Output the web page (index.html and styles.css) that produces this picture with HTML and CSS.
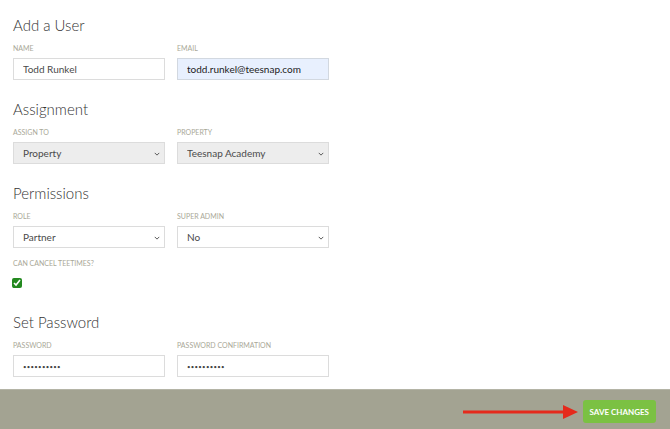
FILE: index.html
```html
<!DOCTYPE html>
<html lang="en">
  <head>
    <meta charset="UTF-8" />
    <meta name="viewport" content="width=device-width, initial-scale=1.0" />
    <title>Add a User</title>
    <link rel="stylesheet" href="styles.css">
  </head>
  <body>
    <div class="page">
      <form class="user-form">
        <!-- User details -->
        <div class="section">
          <h2>Add a User</h2>
          <div class="row">
            <div class="field">
              <label for="name">Name</label>
              <input type="text" id="name" value="Todd Runkel" />
            </div>
            <div class="field">
              <label for="email">Email</label>
              <input type="text" id="email" class="autofill" value="todd.runkel@teesnap.com" />
            </div>
          </div>
        </div>

        <!-- Assignment -->
        <div class="section">
          <h2>Assignment</h2>
          <div class="row">
            <div class="field">
              <label for="assignTo">Assign To</label>
              <div class="select-wrap">
                <select id="assignTo" class="grey">
                  <option>Property</option>
                </select>
                <svg class="chevron" viewBox="0 0 8 5" width="6" height="4"><path d="M1 1l3 3 3-3" fill="none" stroke="#555" stroke-width="1.3"/></svg>
              </div>
            </div>
            <div class="field">
              <label for="property">Property</label>
              <div class="select-wrap">
                <select id="property" class="grey">
                  <option>Teesnap Academy</option>
                </select>
                <svg class="chevron" viewBox="0 0 8 5" width="6" height="4"><path d="M1 1l3 3 3-3" fill="none" stroke="#555" stroke-width="1.3"/></svg>
              </div>
            </div>
          </div>
        </div>

        <!-- Permissions -->
        <div class="section">
          <h2>Permissions</h2>
          <div class="row">
            <div class="field">
              <label for="role">Role</label>
              <div class="select-wrap">
                <select id="role">
                  <option>Partner</option>
                </select>
                <svg class="chevron" viewBox="0 0 8 5" width="6" height="4"><path d="M1 1l3 3 3-3" fill="none" stroke="#555" stroke-width="1.3"/></svg>
              </div>
            </div>
            <div class="field">
              <label for="superAdmin">Super Admin</label>
              <div class="select-wrap">
                <select id="superAdmin">
                  <option>No</option>
                </select>
                <svg class="chevron" viewBox="0 0 8 5" width="6" height="4"><path d="M1 1l3 3 3-3" fill="none" stroke="#555" stroke-width="1.3"/></svg>
              </div>
            </div>
          </div>
          <div class="check-field">
            <label for="cancel">Can Cancel Teetimes?</label>
            <input type="checkbox" id="cancel" checked />
          </div>
        </div>

        <!-- Password -->
        <div class="section">
          <h2>Set Password</h2>
          <div class="row">
            <div class="field">
              <label for="password">Password</label>
              <input type="password" id="password" value="abcdefghij" />
            </div>
            <div class="field">
              <label for="passwordConfirm">Password Confirmation</label>
              <input type="password" id="passwordConfirm" value="abcdefghij" />
            </div>
          </div>
        </div>
      </form>
    </div>

    <div class="footer">
      <svg class="arrow" viewBox="0 0 118 16" width="118" height="16">
        <line x1="2" y1="8" x2="104" y2="8" stroke="#e52a1c" stroke-width="3" />
        <path d="M102 1 L117 8 L102 15 Z" fill="#e52a1c" />
      </svg>
      <button type="submit" class="save-btn">Save Changes</button>
    </div>
  </body>
</html>
```

FILE: styles.css
```css
html,
body {
  height: 100%;
}

body {
  margin: 0;
  font-family: Lato, "Open Sans", sans-serif;
  background-color: white;
  color: #3b3b3b;
  display: flex;
  flex-direction: column;
}

.page {
  flex: 1;
  padding: 15px 13px 0;
}

.section {
  margin-bottom: 19px;
}

.section:last-child {
  margin-bottom: 0;
}

.section h2 {
  font-size: 15px;
  font-weight: 300;
  line-height: 20px;
  margin: 0 0 8px;
  color: #333;
}

.row {
  display: grid;
  grid-template-columns: 152px 152px;
  column-gap: 12px;
}

label {
  display: block;
  font-size: 7px;
  line-height: 10px;
  text-transform: uppercase;
  color: #a9a898;
  margin-bottom: 5px;
}

input[type="text"],
input[type="password"],
select {
  display: block;
  box-sizing: border-box;
  width: 100%;
  height: 22px;
  margin: 0;
  padding: 0 9px;
  border: 1px solid #dcdcdc;
  border-radius: 0;
  background-color: white;
  font-family: inherit;
  font-size: 10px;
  color: #4a4a4a;
  outline: none;
}

input[type="password"] {
  font-size: 6px;
  letter-spacing: 0.3px;
  color: #444;
}

input.autofill {
  background-color: #e8f0fe;
  border-color: #d2d8e0;
  color: #222;
}

select {
  appearance: none;
  -webkit-appearance: none;
}

select.grey {
  background-color: #ededed;
}

.select-wrap {
  position: relative;
}

.chevron {
  position: absolute;
  right: 5px;
  top: 10px;
  pointer-events: none;
}

.check-field {
  margin-top: 10px;
  height: 35px;
}

.check-field input {
  display: block;
  margin: 10px 0 0 -1px;
  width: 10px;
  height: 10px;
  accent-color: #23891f;
}

.footer {
  height: 40px;
  flex-shrink: 0;
  box-sizing: border-box;
  background-color: #a3a392;
  border-top: 1px solid #b4b4a6;
  display: flex;
  justify-content: flex-end;
  align-items: flex-start;
  padding: 10px 14px 0;
  gap: 4px;
}

.arrow {
  margin-top: 4px;
}

.save-btn {
  height: 23px;
  padding: 0 7px;
  background-color: #7bc143;
  color: white;
  border: none;
  border-radius: 3px;
  font-family: Lato, "Open Sans", sans-serif;
  font-size: 8px;
  font-weight: 700;
  text-transform: uppercase;
  cursor: pointer;
}
```
